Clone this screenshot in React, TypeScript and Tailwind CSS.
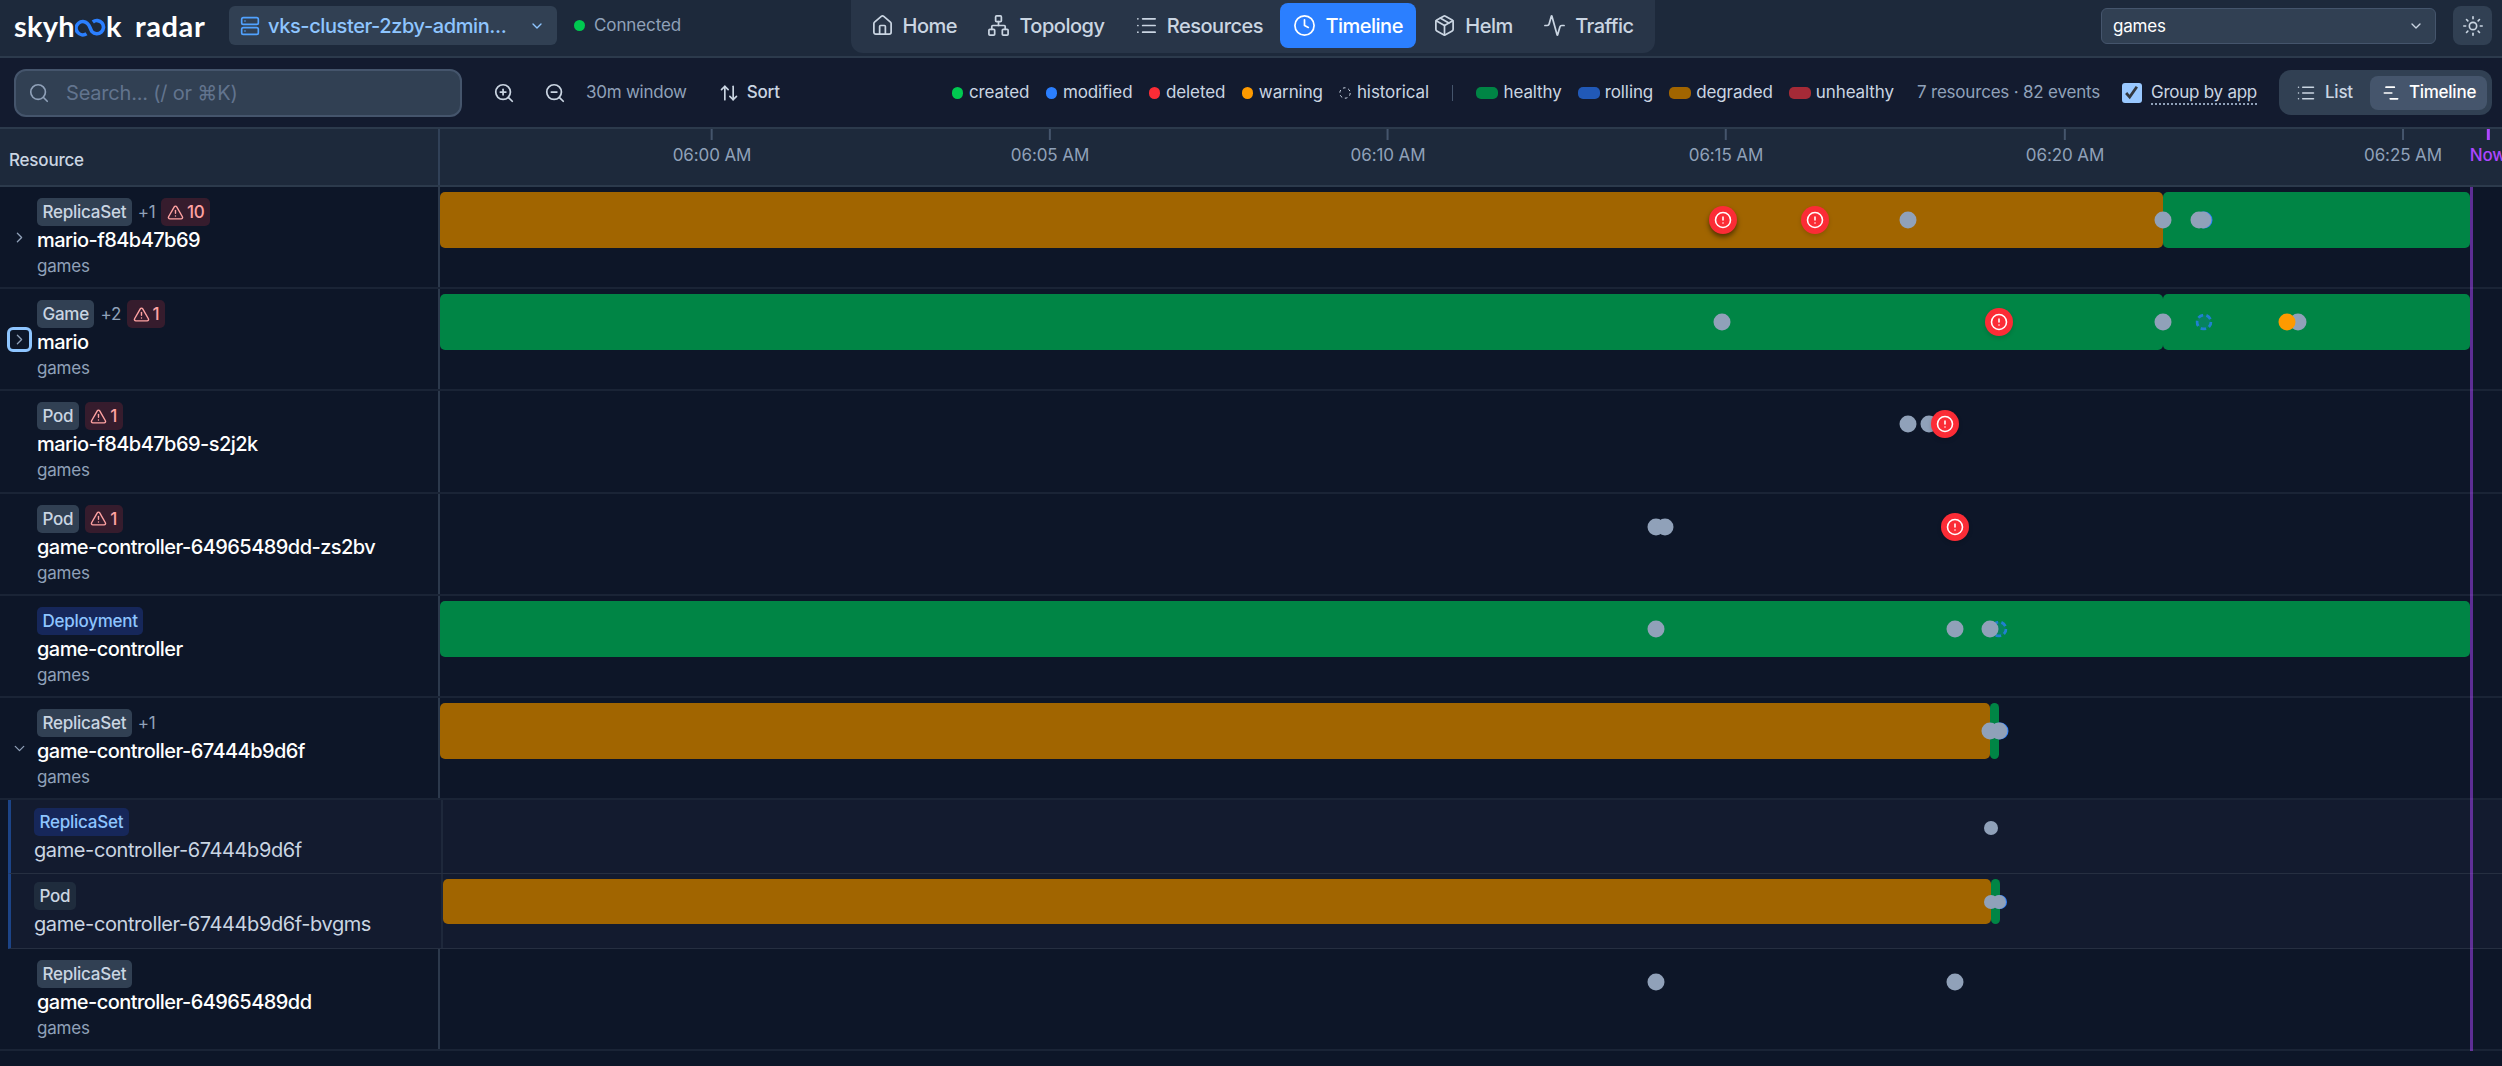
import {
  Activity,
  AlertCircle,
  AlertTriangle,
  ArrowUpDown,
  ChevronDown,
  ChevronRight,
  Clock,
  House,
  List,
  Network,
  Package,
  Search,
  Server,
  Sun,
  ZoomIn,
  ZoomOut,
} from "lucide-react";

// kind: g = grey, o = orange, b = blue, r = red alert, d = dashed (historical)
type Mark = { x: number; kind: "g" | "o" | "r" | "d" | "b"; glow?: boolean };
type Span = { x: number; w: number; color: "green" | "amber" };
type Row = {
  kind: string;
  blue?: boolean;
  extra?: string;
  alerts?: number;
  name: string;
  toggle?: "closed" | "open" | "focus";
  child?: boolean;
  spans?: Span[];
  marks: Mark[];
};

const rows: Row[] = [
  {
    kind: "ReplicaSet",
    extra: "+1",
    alerts: 10,
    name: "mario-f84b47b69",
    toggle: "closed",
    spans: [
      { x: 0, w: 1723, color: "amber" },
      { x: 1723, w: 307, color: "green" },
    ],
    marks: [
      { x: 1283, kind: "r", glow: true },
      { x: 1375, kind: "r" },
      { x: 1468, kind: "g" },
      { x: 1723, kind: "g" },
      { x: 1764, kind: "b" },
      { x: 1763, kind: "g" },
      { x: 1759, kind: "g" },
    ],
  },
  {
    kind: "Game",
    extra: "+2",
    alerts: 1,
    name: "mario",
    toggle: "focus",
    spans: [
      { x: 0, w: 1723, color: "green" },
      { x: 1723, w: 307, color: "green" },
    ],
    marks: [
      { x: 1282, kind: "g" },
      { x: 1559, kind: "r" },
      { x: 1723, kind: "g" },
      { x: 1764, kind: "d" },
      { x: 1858, kind: "g" },
      { x: 1847, kind: "o" },
    ],
  },
  {
    kind: "Pod",
    alerts: 1,
    name: "mario-f84b47b69-s2j2k",
    marks: [
      { x: 1468, kind: "g" },
      { x: 1489, kind: "g" },
      { x: 1505, kind: "r" },
    ],
  },
  {
    kind: "Pod",
    alerts: 1,
    name: "game-controller-64965489dd-zs2bv",
    marks: [
      { x: 1216, kind: "g" },
      { x: 1225, kind: "g" },
      { x: 1515, kind: "r" },
    ],
  },
  {
    kind: "Deployment",
    blue: true,
    name: "game-controller",
    spans: [{ x: 0, w: 2030, color: "green" }],
    marks: [
      { x: 1216, kind: "g" },
      { x: 1515, kind: "g" },
      { x: 1559, kind: "d" },
      { x: 1550, kind: "g" },
    ],
  },
  {
    kind: "ReplicaSet",
    extra: "+1",
    name: "game-controller-67444b9d6f",
    toggle: "open",
    spans: [
      { x: 0, w: 1550, color: "amber" },
      { x: 1550, w: 9, color: "green" },
    ],
    marks: [
      { x: 1560, kind: "b" },
      { x: 1559, kind: "g" },
      { x: 1550, kind: "g" },
    ],
  },
  {
    kind: "ReplicaSet",
    blue: true,
    name: "game-controller-67444b9d6f",
    child: true,
    marks: [{ x: 1548, kind: "g" }],
  },
  {
    kind: "Pod",
    name: "game-controller-67444b9d6f-bvgms",
    child: true,
    spans: [
      { x: 0, w: 1548, color: "amber" },
      { x: 1548, w: 9, color: "green" },
    ],
    marks: [
      { x: 1557, kind: "b" },
      { x: 1556, kind: "g" },
      { x: 1548, kind: "g" },
    ],
  },
  {
    kind: "ReplicaSet",
    name: "game-controller-64965489dd",
    marks: [
      { x: 1216, kind: "g" },
      { x: 1515, kind: "g" },
    ],
  },
];

const nav = [
  { label: "Home", icon: House },
  { label: "Topology", icon: Network },
  { label: "Resources", icon: List },
  { label: "Timeline", icon: Clock, active: true },
  { label: "Helm", icon: Package },
  { label: "Traffic", icon: Activity },
];

const ticks = [
  { x: 272, label: "06:00 AM" },
  { x: 610, label: "06:05 AM" },
  { x: 948, label: "06:10 AM" },
  { x: 1286, label: "06:15 AM" },
  { x: 1625, label: "06:20 AM" },
  { x: 1963, label: "06:25 AM" },
];

function Logo() {
  return (
    <div className="flex items-center font-[Lato,Inter,sans-serif] text-[29px] leading-none font-bold text-white">
      <span className="w-[61px] tracking-[0.2px]">skyh</span>
      <svg width="31" height="20" viewBox="0 0 31 20" fill="none" stroke="#2b7fff" strokeWidth="3.6" className="mt-[5px]">
        <path d="M11.500 15.700A6.600 6.600 0 1 1 12.500 5.600C15 7.500 15 11 17 13.600A6.600 6.600 0 1 0 17.800 4" />
      </svg>
      <span className="w-[29px]">k</span>
      <span className="tracking-[0.600px]">radar</span>
    </div>
  );
}

function Header() {
  return (
    <header className="flex h-[58px] items-start justify-between border-b-2 border-[#2c3a4c] bg-[#1d293b]">
      <div className="flex w-[851px] items-center pt-[6px] pl-[14px]">
        <div className="w-[215px]">
          <Logo />
        </div>
        <div className="flex h-[39px] w-[328px] items-center rounded-md bg-[#314053] px-[11px] text-[#8ec5ff]">
          <Server className="size-5 text-[#51a2ff]" strokeWidth={2} />
          <span className="ml-[8px] flex-1 text-[20px] font-medium tracking-[-0.400px]">vks-cluster-2zby-admin...</span>
          <ChevronDown className="mr-[1px] size-4" />
        </div>
        <span className="ml-[17px] size-[11px] rounded-full bg-[#00c950]" />
        <span className="ml-[9px] text-[17px] tracking-[-0.100px] text-[#90a1b9]">Connected</span>
      </div>
      <nav className="flex h-[53px] w-[804px] items-start gap-[3.400px] rounded-b-xl bg-[#283548] pt-[3px] pl-[6px] text-[20px] font-medium tracking-[-0.500px] text-[#cad5e2]">
        {nav.map(({ label, icon: Icon, active }) => (
          <div
            key={label}
            className={
              active
                ? "flex h-[45px] items-center gap-[9px] rounded-lg bg-[#2b7fff] px-[13.500px] text-white"
                : "flex h-[45px] items-center gap-[9px] px-[13.500px]"
            }
          >
            <Icon className="size-[23px]" strokeWidth={1.8} />
            {label}
          </div>
        ))}
      </nav>
      <div className="flex flex-1 items-center justify-end gap-[17px] pt-[6px] pr-[10px]">
        <div className="flex h-[36px] w-[335px] items-center justify-between rounded-md border border-[#45556c] bg-[#314053] px-[11px] text-[17px] tracking-[-0.200px] text-white">
          <span className="pt-[2px]">games</span>
          <ChevronDown className="size-4 text-[#cad5e2]" />
        </div>
        <div className="flex size-[39px] items-center justify-center rounded-lg bg-[#314053]">
          <Sun className="size-[22px] text-[#cad5e2]" strokeWidth={1.8} />
        </div>
      </div>
    </header>
  );
}

function DashedDot() {
  return (
    <svg viewBox="0 0 12 12" className="size-[12px]" fill="none" stroke="#cad5e2">
      <circle cx="6" cy="6" r="5.200" strokeDasharray="2.700 2.740" />
    </svg>
  );
}

function Toolbar() {
  const dots = [
    { label: "created", cls: "bg-[#00c950]" },
    { label: "modified", cls: "bg-[#2b7fff]" },
    { label: "deleted", cls: "bg-[#fb2c36]" },
    { label: "warning", cls: "bg-[#fe9a00]" },
    { label: "historical", cls: "" },
  ];
  const bars = [
    { label: "healthy", cls: "bg-[#008545]" },
    { label: "rolling", cls: "bg-[#2159b7]" },
    { label: "degraded", cls: "bg-[#a16500]" },
    { label: "unhealthy", cls: "bg-[#a52a37]" },
  ];
  return (
    <div className="flex h-[71px] items-center border-b-2 border-[#2c3a4c] bg-[#131b2f] text-[17px] tracking-[-0.100px] text-[#cad5e2]">
      <div className="ml-[14px] flex h-[48px] w-[448px] items-center rounded-xl border-2 border-[#45556c] bg-[#314053] pl-[12px]">
        <Search className="size-[22px] text-[#90a1b9]" strokeWidth={1.8} />
        <span className="ml-[16px] text-[20px] tracking-[-0.200px] text-[#62748e]">Search... (/ or ⌘K)</span>
      </div>
      <ZoomIn className="ml-[31px] size-[22px]" strokeWidth={1.9} />
      <ZoomOut className="ml-[29px] size-[22px]" strokeWidth={1.9} />
      <span className="ml-[20px] tracking-[-0.250px] text-[#90a1b9]">30m window</span>
      <div className="ml-[32px] flex items-center gap-[8px] font-medium tracking-[-0.200px]">
        <ArrowUpDown className="size-[20px]" />
        Sort
      </div>
      <div className="ml-auto flex items-center">
        <div className="flex items-center gap-[16.500px] pt-px">
          {dots.map((d) => (
            <div key={d.label} className="flex items-center gap-[5.500px]">
              {d.cls ? <span className={`size-[11.500px] rounded-full ${d.cls}`} /> : <DashedDot />}
              {d.label}
            </div>
          ))}
        </div>
        <span className="mx-[23px] h-[16px] w-[1.500px] bg-[#45556c]" />
        <div className="flex items-center gap-[16px] pt-px">
          {bars.map((b) => (
            <div key={b.label} className="flex items-center gap-[5px]">
              <span className={`h-[12px] w-[22px] rounded-[5px] ${b.cls}`} />
              {b.label}
            </div>
          ))}
        </div>
        <span className="ml-[23px] pt-px tracking-[-0.200px] text-[#90a1b9]">7 resources · 82 events</span>
        <span className="ml-[22px] flex size-[20px] items-center justify-center rounded-[3px] bg-[#99c8ff]">
          <svg width="15" height="15" viewBox="0 0 14 14" fill="none" stroke="#33383f" strokeWidth="2.600">
            <path d="M2 7.500 5.300 11.300 12 1.700" />
          </svg>
        </span>
        <span className="ml-[9px] border-b-2 border-dotted border-[#90a1b9] leading-[22px] tracking-[-0.250px]">
          Group by app
        </span>
        <div className="mr-[10px] ml-[22px] flex h-[45px] w-[213px] items-center rounded-xl bg-[#314053] text-[17px] font-medium tracking-[-0.250px]">
          <List className="ml-[17px] size-[20px]" strokeWidth={1.8} />
          <span className="ml-[9px]">List</span>
          <div className="ml-auto mr-[5px] flex h-[34px] w-[117px] items-center justify-center gap-[8px] rounded-lg bg-[#45556c] text-white">
            <svg viewBox="0 0 24 24" className="size-[20px]" fill="none" stroke="currentColor" strokeWidth="2" strokeLinecap="round">
              <path d="M6 5h10M4 12h9M11 19h9" />
            </svg>
            Timeline
          </div>
        </div>
      </div>
    </div>
  );
}

function Axis() {
  return (
    <div className="flex h-[58px] border-b-2 border-[#2c3a4c] bg-[#1d293b] text-[17px]">
      <div className="flex w-[440px] items-center border-r-2 border-[#314158] pt-[7px] pl-[9px] font-medium tracking-[-0.200px] text-[#cad5e2]">
        Resource
      </div>
      <div className="relative flex-1 overflow-hidden text-[#90a1b9]">
        {ticks.map((t) => (
          <div
            key={t.label}
            className="absolute top-0 flex -translate-x-1/2 flex-col items-center whitespace-nowrap"
            style={{ left: t.x }}
          >
            <span className="h-[11px] w-[2px] bg-[#45556c]" />
            <span className="mt-[3px] tracking-[-0.100px]">{t.label}</span>
          </div>
        ))}
        <div className="absolute top-0 left-[2048px] flex -translate-x-1/2 flex-col items-center font-medium text-[#ad46ff]">
          <span className="h-[11px] w-[3px] bg-[#ad46ff]" />
          <span className="mt-[3px] tracking-[-0.200px]">Now</span>
        </div>
      </div>
    </div>
  );
}

function Marker({ mark, child }: { mark: Mark; child?: boolean }) {
  if (mark.kind === "r") {
    return (
      <span
        className={`absolute top-1/2 flex size-[28px] -translate-1/2 items-center justify-center rounded-full bg-[#fb2c36] ${mark.glow ? "shadow-[0_3px_5px_rgba(0,0,0,0.5)]" : "shadow-[0_2px_4px_rgba(0,0,0,0.15)]"}`}
        style={{ left: mark.x }}
      >
        <AlertCircle className="size-[18px] text-white" strokeWidth={2.1} />
      </span>
    );
  }
  if (mark.kind === "d") {
    return (
      <svg
        viewBox="0 0 17 17"
        className="absolute top-1/2 size-[17px] -translate-1/2 opacity-75"
        style={{ left: mark.x }}
        fill="#2b7fff33"
        stroke="#2b7fff"
        strokeWidth="2.800"
      >
        <circle cx="8.500" cy="8.500" r="7" strokeDasharray="5.500 3.300" />
      </svg>
    );
  }
  const fill = { g: "bg-[#90a1b9]", o: "bg-[#fe9a00]", b: "bg-[#2b7fff]" }[mark.kind];
  return (
    <span
      className={`absolute top-1/2 -translate-1/2 rounded-full ${child ? "size-[14px]" : "size-[17px]"} ${fill}`}
      style={{ left: mark.x }}
    />
  );
}

function Lane({ row }: { row: Row }) {
  return (
    <div className={`relative flex-1 ${row.child ? "mt-[5px] h-[45px]" : "mt-[5px] h-[56px]"}`}>
      {row.spans?.map((s) => (
        <span
          key={s.x}
          className={`absolute inset-y-0 rounded-[5px] ${s.color === "green" ? "bg-[#008545]" : "bg-[#a16500]"}`}
          style={{ left: s.x, width: s.w }}
        />
      ))}
      {row.marks.map((m, i) => (
        <Marker key={i} mark={m} child={row.child} />
      ))}
    </div>
  );
}

function ResourceRow({ row }: { row: Row }) {
  const badge = row.blue
    ? "bg-[#16275a] text-[#8ec5ff]"
    : row.child
      ? "bg-[#1f2c3d] text-[#cad5e2]"
      : "bg-[#314053] text-[#cad5e2]";
  return (
    <div
      className={
        row.child
          ? "ml-[8px] flex h-[74.200px] border-b border-l-3 border-b-[#262f41] border-l-[#1c4487] bg-[#131b2f]"
          : "flex h-[102.200px] border-b-2 border-[#1a2436]"
      }
    >
      <div
        className={
          row.child
            ? "flex w-[432px] border-r-2 border-[#1e283b] pt-[8px] pl-[23px]"
            : "flex w-[440px] border-r-2 border-[#2c394c] pt-[11px]"
        }
      >
        {!row.child && (
          <div className="flex w-[37px] items-center pb-[10px] pl-[7px]">
            {row.toggle && (
              <span
                className={
                  row.toggle === "focus"
                    ? "flex size-[25px] items-center justify-center rounded-md border-3 border-[#8ec5ff] text-[#90a1b9]"
                    : "flex size-[25px] items-center justify-center text-[#90a1b9]"
                }
              >
                {row.toggle === "open" ? (
                  <ChevronDown className="size-[17px] shrink-0" strokeWidth={1.8} />
                ) : (
                  <ChevronRight className="size-[17px] shrink-0" strokeWidth={1.8} />
                )}
              </span>
            )}
          </div>
        )}
        <div>
          <div className="flex items-center gap-[6px] text-[17px] leading-[28px] tracking-[-0.250px]">
            <span className={`h-[28px] rounded-[5px] px-[5.500px] font-medium ${badge}`}>{row.kind}</span>
            {row.extra && <span className="text-[#90a1b9]">{row.extra}</span>}
            {row.alerts && (
              <span className="flex h-[28px] items-center gap-[3px] rounded-[5px] bg-[#361c2d] px-[5.500px] font-medium text-[#ffa2a2]">
                <AlertTriangle className="size-[17px]" />
                {row.alerts}
              </span>
            )}
          </div>
          <div
            className={`text-[20px] leading-[28px] ${row.child ? "tracking-[-0.400px] text-[#cad5e2]" : "font-medium tracking-[-0.550px] text-white"}`}
          >
            {row.name}
          </div>
          {!row.child && <div className="text-[17px] leading-[24px] tracking-[-0.200px] text-[#90a1b9]">games</div>}
        </div>
      </div>
      <Lane row={row} />
    </div>
  );
}

export default function App() {
  return (
    <div className="flex h-[1066px] w-[2502px] flex-col overflow-hidden bg-[#0d1628] font-[Inter,sans-serif]">
      <Header />
      <Toolbar />
      <Axis />
      <div className="relative">
        {rows.map((row, i) => (
          <ResourceRow key={i} row={row} />
        ))}
        <span className="absolute inset-y-0 left-[2470px] w-[3px] bg-[#ad46ff]/50" />
      </div>
    </div>
  );
}
